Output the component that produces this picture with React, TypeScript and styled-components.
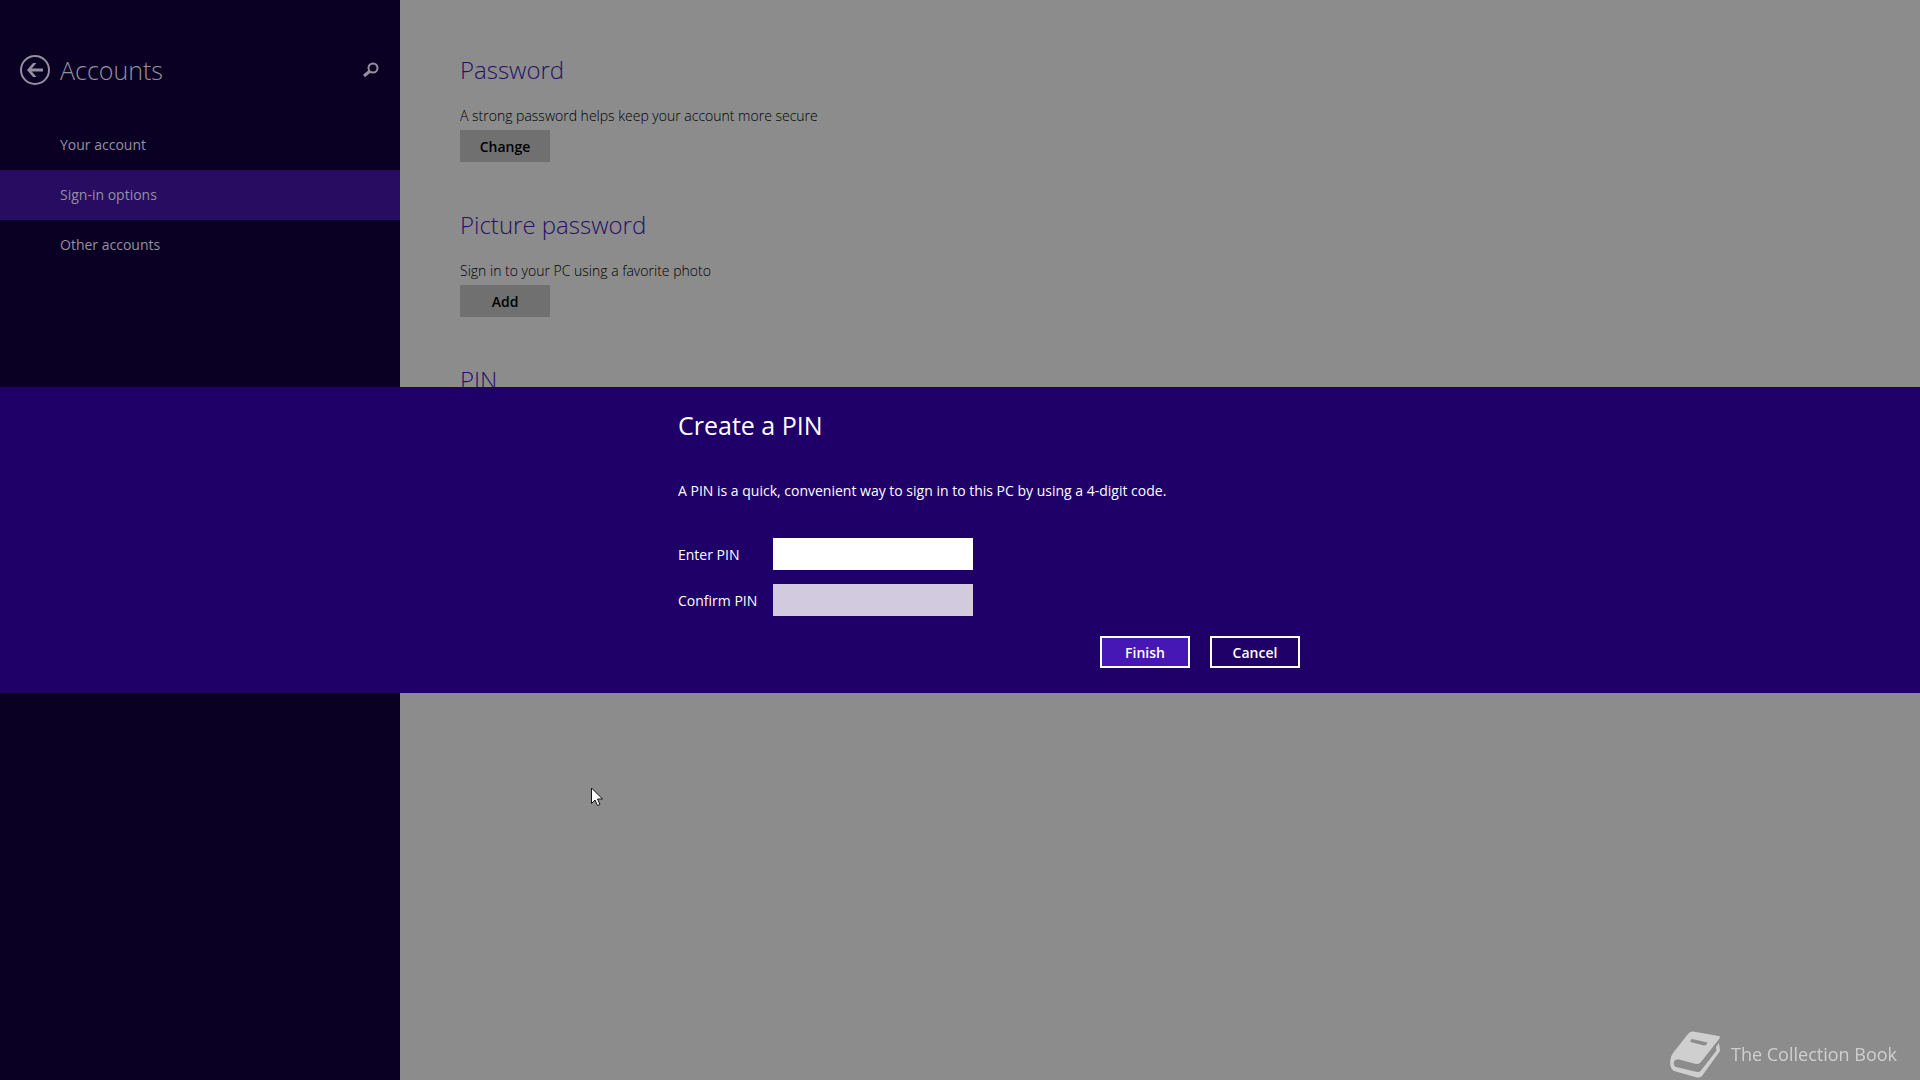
import React from "react";
import styled, { createGlobalStyle } from "styled-components";

const GlobalStyle = createGlobalStyle`
  * { box-sizing: border-box; }
  body {
    margin: 0;
    background: #8c8c8c;
    font-family: "Open Sans", "Noto Sans", sans-serif;
    font-size: 14px;
    line-height: 20px;
  }
  h1, h2, p { margin: 0; }
  button, input { font: inherit; }
`;

const Page = styled.div`
  display: flex;
  min-height: 100vh;
`;

const Sidebar = styled.aside`
  flex: 0 0 400px;
  background: #0a0024;
  color: #9590a0;
`;

const SidebarHeader = styled.header`
  display: flex;
  align-items: center;
  gap: 10px;
  height: 120px;
  padding: 20px 20px 0;
`;

const IconButton = styled.button`
  display: flex;
  padding: 0;
  border: 0;
  background: none;
  color: inherit;
`;

const SidebarTitle = styled.h1`
  flex: 1;
  font-size: 25px;
  line-height: 36px;
  font-weight: 300;
`;

const NavLink = styled.a<{ $active?: boolean }>`
  display: flex;
  align-items: center;
  height: 50px;
  padding-left: 60px;
  background: ${(p) => (p.$active ? "#270c61" : "transparent")};
  color: inherit;
  text-decoration: none;
`;

const Content = styled.main`
  flex: 1;
  padding: 52px 60px;
`;

const Section = styled.section`
  display: flex;
  flex-direction: column;
  align-items: flex-start;
  height: 155px;
  color: #000;
`;

const Heading = styled.h2`
  margin-bottom: 18px;
  color: #271063;
  font-size: 24px;
  line-height: 36px;
  font-weight: 300;
`;

const Description = styled.p`
  font-weight: 300;
`;

const Button = styled.button`
  width: 90px;
  height: 32px;
  padding: 2px 0 0;
  border: 0;
  background: #707070;
  color: #000;
  font-weight: 600;
`;

const SectionButton = styled(Button)`
  margin-top: 4px;
`;

const Overlay = styled.div`
  position: fixed;
  inset: 0;
  display: flex;
  align-items: center;
`;

const Dialog = styled.div`
  flex: 1;
  padding: 20px 20px 25px;
  background: #1f0068;
  color: #fff;
`;

const DialogBody = styled.form`
  display: flex;
  flex-direction: column;
  max-width: 680px;
  margin: 0 auto;
  padding-left: 58px;
`;

const DialogTitle = styled.h2`
  font-size: 25px;
  line-height: 36px;
  font-weight: 400;
`;

const DialogText = styled.p`
  margin: 38px 0 37px;
`;

const Field = styled.div`
  display: flex;
  align-items: center;
  margin-bottom: 14px;
`;

const Label = styled.label`
  width: 95px;
  padding-top: 2px;
`;

const PinInput = styled.input`
  width: 200px;
  height: 32px;
  padding: 4px 8px;
  border: 0;
  background: #fff;
  outline: none;

  &:disabled { background: #d2cbe0; }
`;

const Actions = styled.div`
  display: flex;
  justify-content: flex-end;
  gap: 20px;
  margin-top: 6px;
`;

const DialogButton = styled(Button)<{ $primary?: boolean }>`
  border: 2px solid #fff;
  background: ${(p) => (p.$primary ? "#4617b4" : "transparent")};
  color: #fff;
`;

const Watermark = styled.div`
  position: fixed;
  right: 23px;
  bottom: 2px;
  display: flex;
  align-items: center;
  gap: 11px;
  color: #cfcfcf;
  font-size: 18px;
  line-height: 24px;
`;

const WatermarkText = styled.span`
  padding-bottom: 2px;
`;

const Pointer = styled.svg`
  position: fixed;
  left: 591px;
  top: 787px;
`;

const BackIcon = () => (
  <svg width="30" height="30" viewBox="0 0 30 30" fill="none" stroke="currentColor">
    <circle cx="15" cy="15" r="14" strokeWidth="2" />
    <path d="M23 15H9" strokeWidth="3" />
    <path d="M16.5 8H13l-6 7 6 7h3.500l-6-7z" fill="currentColor" stroke="none" />
  </svg>
);

const SearchIcon = () => (
  <svg width="18" height="16" viewBox="0 0 18 16" fill="none" stroke="currentColor">
    <circle cx="11" cy="6" r="4.500" strokeWidth="2" />
    <path d="M8 9l-6 5" strokeWidth="3" />
  </svg>
);

const BookIcon = () => (
  <svg width="50" height="47" viewBox="0 0 50 47" fill="currentColor">
    <path
      fillRule="evenodd"
      d="M23 0.500 L49 5 Q50.500 5.500 49.500 7.500 L31 31 Q29 33.500 26 33 L9 28.500 Q5 28 4 30.500 Q3 35 6 36 L27 41 Q29.500 41.500 31 39.500 L46.500 19.500 L46 16 L49 12 L50 20 L32 45 Q30 47 27 46.500 L4 40 Q-1 37 0.500 28 Q1 25 3 22 L18 3 Q20 0 23 0.500 Z M22 8 Q20 9 20.500 11 L34 14.500 Q37 14 37.500 11.500 Z"
    />
  </svg>
);

const sections = [
  { title: "Password", text: "A strong password helps keep your account more secure", action: "Change" },
  { title: "Picture password", text: "Sign in to your PC using a favorite photo", action: "Add" },
];

const links = ["Your account", "Sign-in options", "Other accounts"];

export default function App() {
  return (
    <>
      <GlobalStyle />
      <Page>
        <Sidebar>
          <SidebarHeader>
            <IconButton type="button" aria-label="Back"><BackIcon /></IconButton>
            <SidebarTitle>Accounts</SidebarTitle>
            <IconButton type="button" aria-label="Search"><SearchIcon /></IconButton>
          </SidebarHeader>
          <nav>
            {links.map((link) => (
              <NavLink key={link} href="#" $active={link === "Sign-in options"}>{link}</NavLink>
            ))}
          </nav>
        </Sidebar>
        <Content>
          {sections.map((s) => (
            <Section key={s.title}>
              <Heading>{s.title}</Heading>
              <Description>{s.text}</Description>
              <SectionButton type="button">{s.action}</SectionButton>
            </Section>
          ))}
          <Section>
            <Heading>PIN</Heading>
          </Section>
        </Content>
      </Page>
      <Overlay>
        <Dialog role="dialog" aria-labelledby="dialog-title">
          <DialogBody>
            <DialogTitle id="dialog-title">Create a PIN</DialogTitle>
            <DialogText>A PIN is a quick, convenient way to sign in to this PC by using a 4-digit code.</DialogText>
            <Field>
              <Label htmlFor="pin">Enter PIN</Label>
              <PinInput id="pin" type="password" />
            </Field>
            <Field>
              <Label htmlFor="confirm">Confirm PIN</Label>
              <PinInput id="confirm" type="password" disabled />
            </Field>
            <Actions>
              <DialogButton type="button" $primary>Finish</DialogButton>
              <DialogButton type="button">Cancel</DialogButton>
            </Actions>
          </DialogBody>
        </Dialog>
      </Overlay>
      <Watermark>
        <BookIcon />
        <WatermarkText>The Collection Book</WatermarkText>
      </Watermark>
      <Pointer width="13" height="20" viewBox="0 0 13 20" fill="#fff" stroke="#111">
        <path d="M0.500 1v15.500l3.500-3.500 2.500 5.500 2.500-1-2.500-5.500h5z" />
      </Pointer>
    </>
  );
}
